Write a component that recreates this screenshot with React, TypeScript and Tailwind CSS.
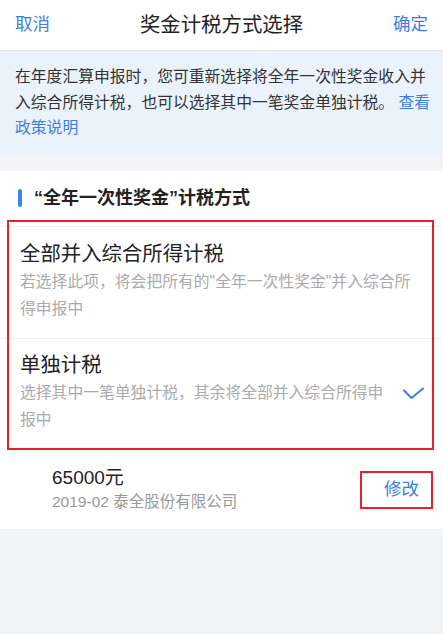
import React from "react";

const font = { fontFamily: '"Liberation Sans", "Noto Sans CJK SC", sans-serif' };

function Check() {
  return (
    <svg width="22" height="14" viewBox="0 0 22 14" fill="none">
      <polyline
        points="1,4.5 8.5,12 20,2.5"
        stroke="#3b7de6"
        strokeWidth="2"
        strokeLinecap="round"
        strokeLinejoin="round"
      />
    </svg>
  );
}

export default function App() {
  return (
    <div
      className="min-h-screen bg-[#f3f4f8] text-[#333]"
      style={font}
    >
      {/* Top bar */}
      <div className="h-[51px] bg-white border-b border-[#e3e6ea] flex items-center justify-between px-[15px]">
        <span className="text-[17.5px] text-[#3e7fde] leading-none">取消</span>
        <span className="text-[20.4px] text-[#222] leading-none">奖金计税方式选择</span>
        <span className="text-[17.5px] text-[#3e7fde] leading-none">确定</span>
      </div>

      {/* Notice */}
      <div className="bg-[#eaf2fb] pl-[15px] pr-[12px] pt-[13px] pb-[14px] text-[15.8px] leading-[25.5px] text-[#333]">
        在年度汇算申报时，您可重新选择将全年一次性奖金收入并入综合所得计税，也可以选择其中一笔奖金单独计税。 <span className="text-[#3e7fde]">查看政策说明</span>
      </div>

      <div className="mt-[16px] bg-white border-b border-[#eceef2]">
        {/* Section title */}
        <div className="h-[56px] flex items-center border-b border-[#eeeeee]">
          <div className="ml-[18px] w-[4px] h-[18px] rounded-full bg-[#3d84f3]" />
          <span className="ml-[12px] text-[18px] font-bold text-[#222]">“全年一次性奖金”计税方式</span>
        </div>

        {/* Options */}
        <div className="relative">
          <div className="pl-[20px] pr-[25px] pt-[13px] pb-[16px] border-b border-[#eeeeee]">
            <div className="text-[20.4px] leading-[28px] text-[#222]">全部并入综合所得计税</div>
            <div className="w-[398px] text-[15.8px] leading-[27px] text-[#aaaaaa]">
              若选择此项，将会把所有的"全年一次性奖金"并入综合所得申报中
            </div>
          </div>
          <div className="flex items-center pl-[20px] pr-[18px] pt-[12px] pb-[17px]">
            <div className="w-[370px]">
              <div className="text-[20.4px] leading-[28px] text-[#222]">单独计税</div>
              <div className="text-[15.8px] leading-[27px] text-[#aaaaaa]">
                选择其中一笔单独计税，其余将全部并入综合所得申报中
              </div>
            </div>
            <div className="ml-auto mt-[2px]">
              <Check />
            </div>
          </div>
          <div className="absolute left-[7px] right-[9px] top-[-7px] bottom-0 border-2 border-[#e5212b] pointer-events-none" />
        </div>

        {/* Bonus item */}
        <div className="flex items-center justify-between pl-[52px] pr-[10px] pt-[16px] pb-[15px]">
          <div>
            <div className="text-[19px] leading-[24px] text-[#222]">65000元</div>
            <div className="text-[15.5px] leading-[24px] text-[#999999]">2019-02 泰全股份有限公司</div>
          </div>
          <div className="w-[73px] h-[38px] border-2 border-[#e5212b] flex items-center justify-end pr-[12px] text-[17.5px] text-[#3e7fde]">
            修改
          </div>
        </div>
      </div>
    </div>
  );
}
